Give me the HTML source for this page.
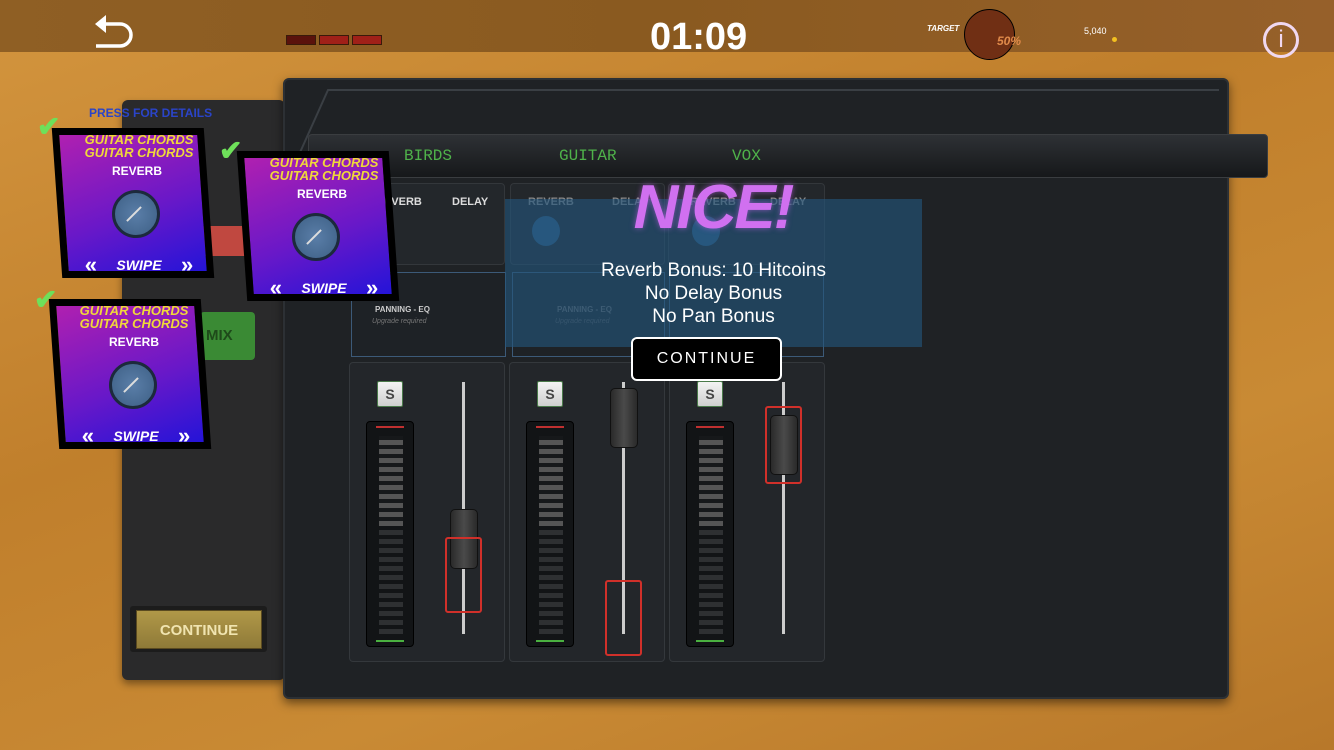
<!DOCTYPE html>
<html><head><meta charset="utf-8"><style>
*{margin:0;padding:0;box-sizing:border-box}
body{width:1334px;height:750px;overflow:hidden;position:relative;font-family:"Liberation Sans",sans-serif;background:linear-gradient(160deg,#d3953e 0%,#c07f2c 40%,#c98a34 70%,#b8782a 100%)}
.abs{position:absolute}
.top{left:0;top:0;width:1334px;height:52px;background:linear-gradient(90deg,#8f5f24,#8a5a20 50%,#96602a);}
.red{top:35px;height:10px;width:30px;border:1px solid #3a1a0a}
.lp{left:122px;top:100px;width:163px;height:580px;background:#2a2a2b;border-radius:6px;box-shadow:0 4px 8px rgba(0,0,0,.4)}
.mp{left:283px;top:78px;width:946px;height:621px;background:#1f2225;border-radius:6px;border:2px solid #2c3034;box-shadow:0 4px 10px rgba(0,0,0,.5)}
.bar{left:308px;top:134px;width:960px;height:44px;background:linear-gradient(#2e3135,#16181a);border-radius:4px;border:1px solid #3a3d40}
.lbl{top:147px;color:#4fb24a;font-family:"Liberation Mono",monospace;font-size:16px}
.fx{height:82px;background:#23272b;border:1px solid #33373b;border-radius:4px}
.fx2{height:85px;border:1px solid #3c5a78;background:#1e2226}
.fxt{font-size:11px;font-weight:bold;color:#ddd}
.strip{top:362px;width:156px;height:300px;background:#23262a;border:1px solid #34383c;border-radius:4px}
.sbtn{width:26px;height:26px;background:linear-gradient(#f3f3f3,#cfcfcf);border:1px solid #4a7a4a;border-radius:2px;font-weight:bold;color:#444;text-align:center;line-height:25px;font-size:14px}
.meter{width:48px;height:226px;border:1px solid #000;border-radius:4px;background:repeating-linear-gradient(#16181a 0 4px,#555 4px 9px) 12px 14px/24px 90px no-repeat,repeating-linear-gradient(#121416 0 4px,#2e3032 4px 9px) 12px 104px/24px 108px no-repeat,#121416}
.rail{width:3px;height:252px;background:#ccc}
.knob{width:28px;height:60px;background:linear-gradient(90deg,#2a2a2a,#4a4a4a 50%,#2a2a2a);border-radius:5px;border:1px solid #111}
.rbox{border:2px solid #d0302a;border-radius:3px}
.card{width:152px;height:150px;background:linear-gradient(160deg,#b020b0,#6a18c8 55%,#2414d8);border:7px solid #000;transform:skewX(4deg)}
.ct{position:absolute;width:100%;text-align:center;font-weight:bold;font-style:italic;color:#f0d83a;font-size:13px;line-height:13px}
.rv{position:absolute;width:100%;text-align:center;color:#fff;font-size:12px;font-weight:bold}
.kn{position:absolute;width:48px;height:48px;border-radius:50%;background:radial-gradient(#5a7ea8,#3d5f85);border:3px solid #1c2a3c}
.kn:after{content:"";position:absolute;left:9px;top:20px;width:20px;height:2px;background:#ddd;transform:rotate(-45deg)}
.sw{position:absolute;width:100%;text-align:center;color:#fff;font-size:14px;font-weight:bold;font-style:italic}
.sw b{font-size:22px;font-style:normal;vertical-align:-2px}
.chk{position:absolute;color:#6ee05a;font-size:28px;font-weight:bold}
</style></head><body>
<div class="abs top"></div>
<svg class="abs" style="left:92px;top:14px" width="44" height="42" viewBox="0 0 44 42"><path d="M12 10 H28 A11 11 0 0 1 28 32 H4" fill="none" stroke="#fff" stroke-width="3.5"/><path d="M3 10 L14 1 L14 19 Z" fill="#fff"/></svg>
<div class="abs red" style="left:286px;background:#5a120c"></div>
<div class="abs red" style="left:319px;background:#a02018"></div>
<div class="abs red" style="left:352px;background:#a02018"></div>
<div class="abs" style="left:650px;top:16px;font-size:38px;font-weight:bold;color:#fff">01:09</div>
<div class="abs" style="left:927px;top:24px;font-size:8px;font-weight:bold;font-style:italic;color:#fff">TARGET</div>
<div class="abs" style="left:964px;top:9px;width:51px;height:51px;border-radius:50%;background:#702f14;border:1px solid #000"></div>
<div class="abs" style="left:997px;top:34px;font-size:12px;font-weight:bold;font-style:italic;color:#e08a4a">50%</div>
<div class="abs" style="left:1084px;top:26px;font-size:9px;color:#fff">5,040</div>
<div class="abs" style="left:1112px;top:37px;width:5px;height:5px;border-radius:50%;background:#f3c020"></div>
<div class="abs" style="left:1263px;top:22px;width:36px;height:36px;border-radius:50%;border:3px solid #f0d8f0;color:#f0d8f0;text-align:center;font-size:24px;line-height:30px">i</div>

<div class="abs lp"></div>
<div class="abs" style="left:200px;top:226px;width:50px;height:30px;background:#c04840;border-radius:4px"></div>
<div class="abs" style="left:200px;top:312px;width:55px;height:48px;background:#3a8a34;border-radius:4px;color:#1e4a1a;font-weight:bold;font-size:15px;line-height:48px;padding-left:6px">MIX</div>
<div class="abs" style="left:130px;top:606px;width:137px;height:46px;background:#1c1c1c;border-radius:3px"></div>
<div class="abs" style="left:136px;top:610px;width:126px;height:39px;background:linear-gradient(#b09848,#8f7a38);border:1px solid #5a4a20;color:#f0e4b0;font-weight:bold;font-size:15px;text-align:center;line-height:39px">CONTINUE</div>

<div class="abs mp"></div>
<svg class="abs" style="left:283px;top:78px" width="946" height="100"><path d="M10 90 L45 12 H936" fill="none" stroke="#3a3f44" stroke-width="2"/></svg>
<div class="abs bar"></div>
<div class="abs lbl" style="left:404px">BIRDS</div>
<div class="abs lbl" style="left:559px">GUITAR</div>
<div class="abs lbl" style="left:732px">VOX</div>

<div class="abs fx" style="left:350px;top:183px;width:155px"></div>
<div class="abs fx" style="left:510px;top:183px;width:155px"></div>
<div class="abs fx" style="left:668px;top:183px;width:157px"></div>
<div class="abs fxt" style="left:376px;top:196px">REVERB</div><div class="abs fxt" style="left:452px;top:196px">DELAY</div>
<div class="abs fxt" style="left:528px;top:196px;color:#888">REVERB</div><div class="abs fxt" style="left:612px;top:196px;color:#888">DELAY</div>
<div class="abs fxt" style="left:690px;top:196px;color:#888">REVERB</div><div class="abs fxt" style="left:770px;top:196px;color:#888">DELAY</div>
<div class="abs" style="left:532px;top:216px;width:28px;height:30px;border-radius:50%;background:#2d5a80"></div>
<div class="abs" style="left:692px;top:216px;width:28px;height:30px;border-radius:50%;background:#2d5a80"></div>
<div class="abs fx2" style="left:351px;top:272px;width:155px"></div>
<div class="abs fx2" style="left:512px;top:272px;width:153px"></div>
<div class="abs fx2" style="left:669px;top:272px;width:155px"></div>
<div class="abs" style="left:375px;top:305px;font-size:8px;font-weight:bold;color:#ccc">PANNING - EQ</div>
<div class="abs" style="left:372px;top:318px;font-size:7px;font-style:italic;color:#777">Upgrade required</div>
<div class="abs" style="left:557px;top:305px;font-size:8px;font-weight:bold;color:#666">PANNING - EQ</div>
<div class="abs" style="left:555px;top:318px;font-size:7px;font-style:italic;color:#555">Upgrade required</div>

<div class="abs strip" style="left:349px"></div>
<div class="abs strip" style="left:509px"></div>
<div class="abs strip" style="left:669px"></div>
<div class="abs sbtn" style="left:377px;top:381px">S</div>
<div class="abs sbtn" style="left:537px;top:381px">S</div>
<div class="abs sbtn" style="left:697px;top:381px">S</div>
<div class="abs meter" style="left:366px;top:421px"></div>
<div class="abs meter" style="left:526px;top:421px"></div>
<div class="abs meter" style="left:686px;top:421px"></div>
<div class="abs" style="left:376px;top:426px;width:28px;height:2px;background:#c03030"></div>
<div class="abs" style="left:536px;top:426px;width:28px;height:2px;background:#c03030"></div>
<div class="abs" style="left:696px;top:426px;width:28px;height:2px;background:#c03030"></div>
<div class="abs" style="left:376px;top:640px;width:28px;height:2px;background:#4ab040"></div>
<div class="abs" style="left:536px;top:640px;width:28px;height:2px;background:#4ab040"></div>
<div class="abs" style="left:696px;top:640px;width:28px;height:2px;background:#4ab040"></div>
<div class="abs rail" style="left:462px;top:382px"></div>
<div class="abs rail" style="left:622px;top:382px"></div>
<div class="abs rail" style="left:782px;top:382px"></div>
<div class="abs knob" style="left:450px;top:509px"></div>
<div class="abs knob" style="left:610px;top:388px"></div>
<div class="abs knob" style="left:770px;top:415px"></div>
<div class="abs rbox" style="left:445px;top:537px;width:37px;height:76px"></div>
<div class="abs rbox" style="left:605px;top:580px;width:37px;height:76px"></div>
<div class="abs rbox" style="left:765px;top:406px;width:37px;height:78px"></div>

<div class="abs" style="left:505px;top:199px;width:417px;height:148px;background:rgba(35,85,125,.62)"></div>
<div class="abs" style="left:600px;top:172px;width:226px;text-align:center;font-size:62px;font-weight:bold;font-style:italic;color:#d070f0;letter-spacing:-2px;text-shadow:0 0 6px rgba(200,100,240,.6)">NICE!</div>
<div class="abs" style="left:505px;top:259px;width:417px;text-align:center;color:#fff;font-size:19px;line-height:23px">Reverb Bonus: 10 Hitcoins<br>No Delay Bonus<br>No Pan Bonus</div>
<div class="abs" style="left:631px;top:337px;width:151px;height:44px;background:#000;border:2px solid #fff;border-radius:6px;color:#fff;font-size:16px;letter-spacing:2px;text-align:center;line-height:40px">CONTINUE</div>

<div class="abs" style="left:89px;top:106px;color:#2a44c8;font-size:12px;font-weight:bold">PRESS FOR DETAILS</div>
<div class="abs card" style="left:57px;top:128px"></div>
<div class="abs card" style="left:242px;top:151px"></div>
<div class="abs card" style="left:54px;top:299px"></div>

<div class="abs" style="left:57px;top:128px;width:152px;height:150px">
<div class="ct" style="top:5px;left:6px">GUITAR CHORDS<br>GUITAR CHORDS</div><div class="rv" style="top:36px;left:4px">REVERB</div>
<div class="kn" style="left:55px;top:62px"></div><div class="sw" style="top:124px;left:6px"><b>«</b>&nbsp;&nbsp;&nbsp;&nbsp;&nbsp;SWIPE&nbsp;&nbsp;&nbsp;&nbsp;&nbsp;<b>»</b></div></div>
<div class="abs" style="left:242px;top:151px;width:152px;height:150px">
<div class="ct" style="top:5px;left:6px">GUITAR CHORDS<br>GUITAR CHORDS</div><div class="rv" style="top:36px;left:4px">REVERB</div>
<div class="kn" style="left:50px;top:62px"></div><div class="sw" style="top:124px;left:6px"><b>«</b>&nbsp;&nbsp;&nbsp;&nbsp;&nbsp;SWIPE&nbsp;&nbsp;&nbsp;&nbsp;&nbsp;<b>»</b></div></div>
<div class="abs" style="left:54px;top:299px;width:152px;height:150px">
<div class="ct" style="top:5px;left:4px">GUITAR CHORDS<br>GUITAR CHORDS</div><div class="rv" style="top:36px;left:4px">REVERB</div>
<div class="kn" style="left:55px;top:62px"></div><div class="sw" style="top:124px;left:6px"><b>«</b>&nbsp;&nbsp;&nbsp;&nbsp;&nbsp;SWIPE&nbsp;&nbsp;&nbsp;&nbsp;&nbsp;<b>»</b></div></div>
<div class="chk" style="left:37px;top:110px">✔</div>
<div class="chk" style="left:219px;top:134px">✔</div>
<div class="chk" style="left:34px;top:283px">✔</div>
</body></html>
